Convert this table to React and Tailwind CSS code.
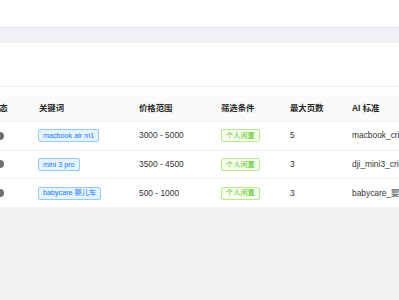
import React from 'react';

const rows = [
  { keyword: 'macbook air m1', price: '3000 - 5000', filter: '个人闲置', pages: 5, ai: 'macbook_criteria' },
  { keyword: 'mini 3 pro', price: '3500 - 4500', filter: '个人闲置', pages: 3, ai: 'dji_mini3_criteria' },
  { keyword: 'babycare 婴儿车', price: '500 - 1000', filter: '个人闲置', pages: 3, ai: 'babycare_婴儿车_criteria' },
];

const cols = 'grid grid-cols-[48px_100px_82px_69px_62px_200px] ml-[-14px]';

function Tag({ color, children }) {
  const styles =
    color === 'green'
      ? 'bg-[#f6ffed] border-[#b7eb8f] text-[#52c41a]'
      : 'bg-[#e6f4ff] border-[#91caff] text-[#1677ff]';
  return (
    <span className={`inline-flex items-center h-[13px] px-[4px] rounded-[2px] border text-[7.2px] leading-none whitespace-nowrap ${styles}`}>
      {children}
    </span>
  );
}

export default function App() {
  return (
    <div
      className="w-[399px] h-[300px] overflow-hidden bg-[#f2f2f5]"
      style={{ fontFamily: '"Liberation Sans", "Noto Sans CJK SC", sans-serif' }}
    >
      {/* top bar */}
      <div className="h-[28px] bg-white border-b border-[#e8e8ec]" />
      <div className="h-[15px] bg-[#f1f1f5]" />

      {/* card */}
      <div className="bg-white">
        <div className="h-[44px] border-b border-[#f0f0f0]" />
        <div className="pt-[8px] overflow-hidden">
          {/* header */}
          <div className={`${cols} h-[27px] bg-[#fafafa] border-b border-[#f0f0f0] text-[8.4px] font-semibold text-[#262626] items-center`}>
            <div className="pl-[5px]">状态</div>
            <div className="pl-[5px]">关键词</div>
            <div className="pl-[5px]">价格范围</div>
            <div className="pl-[5px]">筛选条件</div>
            <div className="pl-[5px]">最大页数</div>
            <div className="pl-[5px] whitespace-nowrap">AI 标准</div>
          </div>

          {rows.map((r) => (
            <div
              key={r.keyword}
              className={`${cols} h-[28.6px] border-b border-[#f0f0f0] text-[8.4px] text-[#333] items-center`}
            >
              <div className="pl-[10px]">
                <span className="block w-[8px] h-[8px] rounded-full bg-[#6e6e6e]" />
              </div>
              <div className="pl-[4px]">
                <Tag color="blue">{r.keyword}</Tag>
              </div>
              <div className="pl-[5px] whitespace-nowrap">{r.price}</div>
              <div className="pl-[5px]">
                <Tag color="green">{r.filter}</Tag>
              </div>
              <div className="pl-[5px]">{r.pages}</div>
              <div className="pl-[5px] whitespace-nowrap">{r.ai}</div>
            </div>
          ))}
        </div>
      </div>
    </div>
  );
}
